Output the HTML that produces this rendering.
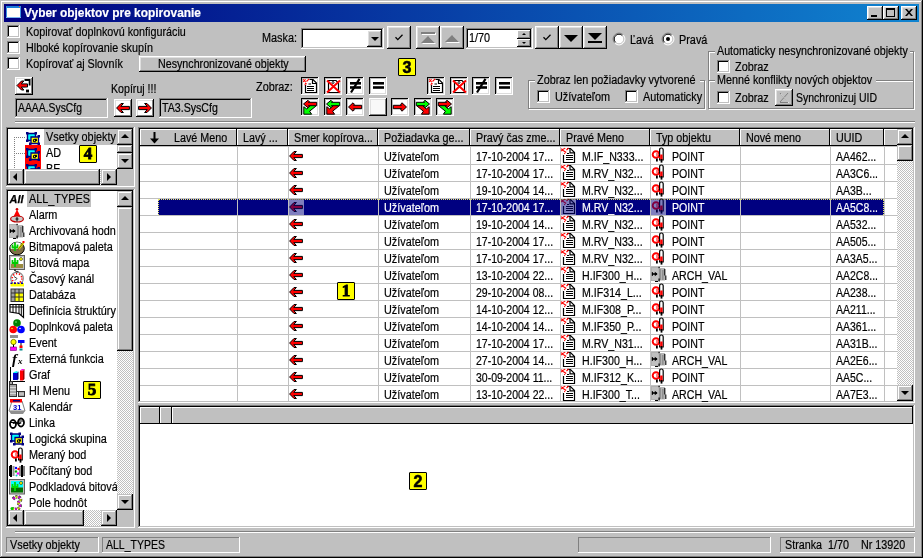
<!DOCTYPE html>
<html><head><meta charset="utf-8"><title>Vyber objektov pre kopirovanie</title>
<style>
html,body{margin:0;padding:0;background:#c0c0c0;}
body{width:923px;height:558px;position:relative;overflow:hidden;font-family:"Liberation Sans",sans-serif;font-size:12.5px;}
div,span,svg{position:absolute;box-sizing:border-box;}
svg{overflow:visible;}
.t{white-space:nowrap;line-height:14px;height:14px;transform-origin:0 50%;font-size:12.5px;-webkit-text-stroke:.2px currentColor;}
.win{left:0;top:0;width:923px;height:558px;background:#c0c0c0;box-shadow:inset -1px -1px 0 #000,inset 1px 1px 0 #c0c0c0,inset -2px -2px 0 #808080,inset 2px 2px 0 #fff;}
.btn{background:#c0c0c0;box-shadow:inset -1px -1px 0 #000,inset 1px 1px 0 #fff,inset -2px -2px 0 #808080,inset 2px 2px 0 #dfdfdf;}
.sb{background:#c0c0c0;box-shadow:inset -1px -1px 0 #000,inset 1px 1px 0 #c0c0c0,inset -2px -2px 0 #808080,inset 2px 2px 0 #fff;}
.btnw{background:#fff;box-shadow:inset -1px -1px 0 #000,inset 1px 1px 0 #fff,inset -2px -2px 0 #808080,inset 2px 2px 0 #dfdfdf;}
.btn1{background:#c0c0c0;box-shadow:inset -1px -1px 0 #000,inset 1px 1px 0 #fff,inset -2px -2px 0 #808080;}
.sunk{box-shadow:inset -1px -1px 0 #fff,inset 1px 1px 0 #808080,inset -2px -2px 0 #c0c0c0,inset 2px 2px 0 #000;}
.sunk1{box-shadow:inset -1px -1px 0 #fff,inset 1px 1px 0 #808080;}
.down{background:#fff;box-shadow:inset -1px -1px 0 #fff,inset 1px 1px 0 #000,inset -2px -2px 0 #dcdcdc,inset 2px 2px 0 #b8b8b8;}
.chk{width:13px;height:13px;background:#fff;box-shadow:inset -1px -1px 0 #fff,inset 1px 1px 0 #808080,inset -2px -2px 0 #c0c0c0,inset 2px 2px 0 #000;}
.hdr{background:#c0c0c0;box-shadow:inset -1px -1px 0 #000,inset 1px 1px 0 #fff;}
.dith{background:repeating-conic-gradient(#fff 0 25%,#c0c0c0 0 50%) 0 0/2px 2px;}
.hl{height:1px;background:#808080;}
.wl{height:1px;background:#fff;}
.bdg{background:#ff0;border:1px solid #000;border-radius:1px;}
.bt{white-space:nowrap;text-align:center;font-weight:bold;font-size:16px;line-height:16px;height:16px;color:#000;-webkit-text-stroke:.5px #000;}
.root{left:0;top:0;width:923px;height:558px;overflow:hidden;will-change:transform;}
</style></head><body>
<div class="root">
<div class="win"></div>

<div class="" style="left:4px;top:4px;width:915px;height:18px;background:linear-gradient(90deg,#000080 0%,#1084d0 100%);"></div>
<svg style="left:6px;top:6px" width="15" height="12" viewBox="0 0 15 12"><rect x="0" y="0" width="15" height="12" fill="#fffff8"/><rect x="0" y="0" width="15" height="2" fill="#1c7fd8"/><rect x="0" y="0" width="1" height="12" fill="#3a8fe0"/><rect x="14" y="0" width="1" height="12" fill="#3a8fe0"/><rect x="0" y="11" width="15" height="1" fill="#7db7ee"/><rect x="13" y="0" width="1" height="1" fill="#e86020"/></svg>
<span class="t" style="left:24px;top:6px;color:#fff;font-weight:bold;transform:scaleX(0.953);">Vyber objektov pre kopirovanie</span>
<div class="btn" style="left:867px;top:6px;width:16px;height:14px;"><div style="left:4px;top:9px;width:6px;height:2px;background:#000"></div></div>
<div class="btn" style="left:883px;top:6px;width:16px;height:14px;"><div style="left:3px;top:2px;width:9px;height:9px;border:1px solid #000;border-top:2px solid #000"></div></div>
<div class="btn" style="left:901px;top:6px;width:16px;height:14px;"><svg style="left:4px;top:3px" width="8" height="7" viewBox="0 0 8 7"><path d="M0 0h2l2 2.3L6 0h2L5 3.5 8 7H6L4 4.7 2 7H0l3-3.5z" fill="#000"/></svg></div>
<div class="chk" style="left:7px;top:25px;width:13px;height:13px;"></div>
<span class="t" style="left:25.5px;top:25px;color:#000;transform:scaleX(0.862);">Kopirovať doplnkovú konfiguráciu</span>
<div class="chk" style="left:7px;top:41px;width:13px;height:13px;"></div>
<span class="t" style="left:25.5px;top:41px;color:#000;transform:scaleX(0.862);">Hlboké kopírovanie skupín</span>
<div class="chk" style="left:7px;top:57px;width:13px;height:13px;"></div>
<span class="t" style="left:25.5px;top:57px;color:#000;transform:scaleX(0.862);">Kopírovať aj Slovník</span>
<div class="btn" style="left:139px;top:56px;width:167px;height:16px;"></div>
<span class="t" style="left:157.5px;top:57px;color:#000;transform:scaleX(0.855);">Nesynchronizované objekty</span>
<div class="btnw" style="left:15px;top:77px;width:18px;height:18px;"><svg style="left:0px;top:0px" width="18" height="18" viewBox="0 0 18 18"><path d="M2 8.5 L6.5 4 H8.9 L6.3 6.9 H12.5 V10.1 H6.3 L8.9 13 H6.5 Z" fill="#f00" stroke="#000" stroke-width="1"/><path d="M9.5 3H14.6V8.6" fill="none" stroke="#000" stroke-width="1.8"/><rect x="10.5" y="10.8" width="3.6" height="1.6" fill="#fff"/><rect x="11" y="12.6" width="3" height="2.8" fill="#000"/></svg></div>
<span class="t" style="left:111px;top:82px;color:#000;transform:scaleX(0.85);">Kopíruj !!!</span>
<div class="sunk" style="left:15px;top:98px;width:93px;height:20px;"></div>
<span class="t" style="left:18px;top:101px;color:#000;transform:scaleX(0.83);">AAAA.SysCfg</span>
<div class="btnw" style="left:114px;top:99px;width:18px;height:18px;"><svg style="left:2px;top:4px" width="14" height="10" viewBox="0 0 14 10"><path d="M0.6 5 L5 0.5 H7.4 L4.8 3.4 H13.4 V6.6 H4.8 L7.4 9.5 H5 Z" fill="#f00" stroke="#000" stroke-width="1"/></svg></div>
<div class="btnw" style="left:136px;top:99px;width:18px;height:18px;"><svg style="left:2px;top:4px" width="14" height="10" viewBox="0 0 14 10"><path d="M13.4 5 L9 0.5 H6.6 L9.2 3.4 H0.6 V6.6 H9.2 L6.6 9.5 H9 Z" fill="#f00" stroke="#000" stroke-width="1"/></svg></div>
<div class="sunk" style="left:159px;top:98px;width:93px;height:20px;"></div>
<span class="t" style="left:162px;top:101px;color:#000;transform:scaleX(0.85);">TA3.SysCfg</span>
<span class="t" style="left:262px;top:31px;color:#000;transform:scaleX(0.868);">Maska:</span>
<div class="sunk" style="left:301px;top:28px;width:83px;height:21px;background:#fff;"></div>
<div class="btn" style="left:367px;top:30px;width:15px;height:17px;"><div style="left:3.5px;top:6.5px;width:0;height:0;border-left:4px solid transparent;border-right:4px solid transparent;border-top:4.5px solid #000"></div></div>
<div class="btn" style="left:387px;top:26px;width:24px;height:23px;"><svg style="left:8px;top:8px" width="8" height="7" viewBox="0 0 8 7"><path d="M0.5 3.2 L2.8 5.6 L7.5 0.8" fill="none" stroke="#000" stroke-width="1.3"/></svg></div>
<div class="btn" style="left:416px;top:26px;width:24px;height:23px;"><div style="left:5px;top:6px;width:14px;height:2px;background:#808080;box-shadow:1px 1px 0 #fff"></div><div style="left:6px;top:11px;width:0;height:0;border-left:7px solid transparent;border-right:7px solid transparent;border-bottom:7px solid #fff"></div><div style="left:5px;top:10px;width:0;height:0;border-left:7px solid transparent;border-right:7px solid transparent;border-bottom:7px solid #808080"></div></div>
<div class="btn" style="left:440px;top:26px;width:24px;height:23px;"><div style="left:6px;top:9.5px;width:0;height:0;border-left:7px solid transparent;border-right:7px solid transparent;border-bottom:7px solid #fff"></div><div style="left:5px;top:8.5px;width:0;height:0;border-left:7px solid transparent;border-right:7px solid transparent;border-bottom:7px solid #808080"></div></div>
<div class="sunk" style="left:466px;top:28px;width:67px;height:21px;background:#fff;"></div>
<span class="t" style="left:469px;top:31px;color:#000;transform:scaleX(0.868);">1/70</span>
<div class="btn1" style="left:517px;top:30px;width:14px;height:9px;"><div style="left:4.5px;top:3px;width:0;height:0;border-left:2.5px solid transparent;border-right:2.5px solid transparent;border-bottom:2.5px solid #000"></div></div>
<div class="btn1" style="left:517px;top:39px;width:14px;height:8px;"><div style="left:4.5px;top:3px;width:0;height:0;border-left:2.5px solid transparent;border-right:2.5px solid transparent;border-top:2.5px solid #000"></div></div>
<div class="btn" style="left:535px;top:26px;width:24px;height:23px;"><svg style="left:8px;top:8px" width="8" height="7" viewBox="0 0 8 7"><path d="M0.5 3.2 L2.8 5.6 L7.5 0.8" fill="none" stroke="#000" stroke-width="1.3"/></svg></div>
<div class="btn" style="left:559px;top:26px;width:24px;height:23px;"><div style="left:5px;top:9px;width:0;height:0;border-left:7px solid transparent;border-right:7px solid transparent;border-top:7px solid #000"></div></div>
<div class="btn" style="left:583px;top:26px;width:24px;height:23px;"><div style="left:5px;top:6.5px;width:0;height:0;border-left:7px solid transparent;border-right:7px solid transparent;border-top:7px solid #000"></div><div style="left:5px;top:15px;width:14px;height:2px;background:#000"></div></div>
<svg style="left:613px;top:33px" width="12" height="12" viewBox="0 0 12 12"><circle cx="6" cy="6" r="5.5" fill="#fff"/><path d="M1.8 10.2 A5.5 5.5 0 0 1 10.2 1.8" fill="none" stroke="#808080" stroke-width="1"/><path d="M10.2 1.8 A5.5 5.5 0 0 1 1.8 10.2" fill="none" stroke="#fff" stroke-width="1"/><path d="M2.6 9.4 A4.5 4.5 0 0 1 9.4 2.6" fill="none" stroke="#000" stroke-width="1"/><path d="M9.4 2.6 A4.5 4.5 0 0 1 2.6 9.4" fill="none" stroke="#c0c0c0" stroke-width="1"/></svg>
<span class="t" style="left:630px;top:33px;color:#000;transform:scaleX(0.868);">Ľavá</span>
<svg style="left:662px;top:33px" width="12" height="12" viewBox="0 0 12 12"><circle cx="6" cy="6" r="5.5" fill="#fff"/><path d="M1.8 10.2 A5.5 5.5 0 0 1 10.2 1.8" fill="none" stroke="#808080" stroke-width="1"/><path d="M10.2 1.8 A5.5 5.5 0 0 1 1.8 10.2" fill="none" stroke="#fff" stroke-width="1"/><path d="M2.6 9.4 A4.5 4.5 0 0 1 9.4 2.6" fill="none" stroke="#000" stroke-width="1"/><path d="M9.4 2.6 A4.5 4.5 0 0 1 2.6 9.4" fill="none" stroke="#c0c0c0" stroke-width="1"/><circle cx="6" cy="6" r="2" fill="#000"/></svg>
<span class="t" style="left:679px;top:33px;color:#000;transform:scaleX(0.868);">Pravá</span>
<div class="bdg" style="left:398px;top:58px;width:18px;height:18px;"></div>
<span class="bt" style="left:398px;top:59.5px;width:18px;font-family:'Liberation Sans',sans-serif;font-size:16px;-webkit-text-stroke:.6px #000">3</span>
<span class="t" style="left:255.5px;top:80px;color:#000;transform:scaleX(0.868);">Zobraz:</span>
<div class="down" style="left:301px;top:77px;width:18px;height:18px;"><svg style="left:0px;top:0px" width="18" height="18" viewBox="0 0 18 18"><path d="M4.5 2.5H12L15.5 6V15.5H4.5Z" fill="#fff" stroke="#000" stroke-width="1.2"/><path d="M11.5 2.5V6.5H15.5" fill="none" stroke="#000" stroke-width="1.2"/><path d="M7.5 7H10M6 9.5H13M6 11.5H13M6 13.5H13" stroke="#000" stroke-width="1.1"/><rect x="2" y="2" width="6.5" height="4" fill="#fff"/><rect x="3" y="5" width="3" height="3" fill="#fff"/><path d="M2.2 2.4l2.4 2.4M4.6 2.4L2.2 4.8M5.5 4.5l2.6-2.6M4 6l1.6 1M3.6 7.6h1" stroke="#f00" stroke-width="1.1"/></svg></div>
<div class="down" style="left:324px;top:77px;width:18px;height:18px;"><svg style="left:0px;top:0px" width="18" height="18" viewBox="0 0 18 18"><path d="M4.5 3.5H12L14.5 6V15.5H4.5Z" fill="#fff" stroke="#000" stroke-width="1.2"/><circle cx="9" cy="5.5" r="1" fill="none" stroke="#000" stroke-width=".9"/><path d="M3 3.5L16 15.5M16 3.5L3 15.5" stroke="#f00" stroke-width="2"/></svg></div>
<div class="down" style="left:346px;top:77px;width:18px;height:18px;"><svg style="left:0px;top:0px" width="18" height="18" viewBox="0 0 18 18"><rect x="4" y="5" width="11" height="2.6" fill="#000"/><rect x="4" y="9.2" width="11" height="2.6" fill="#000"/><path d="M13.5 1.8L5 15.5" stroke="#000" stroke-width="2.2"/></svg></div>
<div class="down" style="left:369px;top:77px;width:18px;height:18px;"><svg style="left:0px;top:0px" width="18" height="18" viewBox="0 0 18 18"><rect x="4" y="5" width="11" height="2.6" fill="#000"/><rect x="4" y="9.2" width="11" height="2.6" fill="#000"/></svg></div>
<div class="down" style="left:427px;top:77px;width:18px;height:18px;"><svg style="left:0px;top:0px" width="18" height="18" viewBox="0 0 18 18"><path d="M4.5 2.5H12L15.5 6V15.5H4.5Z" fill="#fff" stroke="#000" stroke-width="1.2"/><path d="M11.5 2.5V6.5H15.5" fill="none" stroke="#000" stroke-width="1.2"/><path d="M7.5 7H10M6 9.5H13M6 11.5H13M6 13.5H13" stroke="#000" stroke-width="1.1"/><rect x="2" y="2" width="6.5" height="4" fill="#fff"/><rect x="3" y="5" width="3" height="3" fill="#fff"/><path d="M2.2 2.4l2.4 2.4M4.6 2.4L2.2 4.8M5.5 4.5l2.6-2.6M4 6l1.6 1M3.6 7.6h1" stroke="#f00" stroke-width="1.1"/></svg></div>
<div class="down" style="left:450px;top:77px;width:18px;height:18px;"><svg style="left:0px;top:0px" width="18" height="18" viewBox="0 0 18 18"><path d="M4.5 3.5H12L14.5 6V15.5H4.5Z" fill="#fff" stroke="#000" stroke-width="1.2"/><circle cx="9" cy="5.5" r="1" fill="none" stroke="#000" stroke-width=".9"/><path d="M3 3.5L16 15.5M16 3.5L3 15.5" stroke="#f00" stroke-width="2"/></svg></div>
<div class="down" style="left:472px;top:77px;width:18px;height:18px;"><svg style="left:0px;top:0px" width="18" height="18" viewBox="0 0 18 18"><rect x="4" y="5" width="11" height="2.6" fill="#000"/><rect x="4" y="9.2" width="11" height="2.6" fill="#000"/><path d="M13.5 1.8L5 15.5" stroke="#000" stroke-width="2.2"/></svg></div>
<div class="down" style="left:495px;top:77px;width:18px;height:18px;"><svg style="left:0px;top:0px" width="18" height="18" viewBox="0 0 18 18"><rect x="4" y="5" width="11" height="2.6" fill="#000"/><rect x="4" y="9.2" width="11" height="2.6" fill="#000"/></svg></div>
<div class="down" style="left:301px;top:98px;width:18px;height:18px;"><svg style="left:0px;top:0px" width="18" height="18" viewBox="0 0 18 18"><path d="M2.8 16.2 V8.7 L5.8 11 L11 6 L14.8 8.2 L8.6 13.2 L10.6 16.2 Z" fill="#0f0" stroke="#000" stroke-width="1"/><path d="M2.5 6.0 L7 2.3 L8.4 3.7 L7.4 4.3 H15.7 V7.7 H7.4 L8.4 8.3 L7 9.7 Z" fill="#f00" stroke="#000" stroke-width="1"/></svg></div>
<div class="down" style="left:324px;top:98px;width:18px;height:18px;"><svg style="left:0px;top:0px" width="18" height="18" viewBox="0 0 18 18"><path d="M2.8 16.2 V8.7 L5.8 11 L11 6 L14.8 8.2 L8.6 13.2 L10.6 16.2 Z" fill="#f00" stroke="#000" stroke-width="1"/><path d="M2.5 6.0 L7 2.3 L8.4 3.7 L7.4 4.3 H15.7 V7.7 H7.4 L8.4 8.3 L7 9.7 Z" fill="#0f0" stroke="#000" stroke-width="1"/></svg></div>
<div class="down" style="left:346px;top:98px;width:18px;height:18px;"><svg style="left:0px;top:0px" width="18" height="18" viewBox="0 0 18 18"><path d="M2.5 9.0 L7 4.8 L8.4 6.2 L7.4 7.3 H15.7 V10.7 H7.4 L8.4 11.8 L7 13.2 Z" fill="#f00" stroke="#000" stroke-width="1"/></svg></div>
<div class="btn" style="left:369px;top:98px;width:18px;height:18px;background:#f8f8f8;"></div>
<div class="down" style="left:391px;top:98px;width:18px;height:18px;"><svg style="left:0px;top:0px" width="18" height="18" viewBox="0 0 18 18"><path d="M15.5 9.0 L11 4.8 L9.6 6.2 L10.6 7.3 H2.3 V10.7 H10.6 L9.6 11.8 L11 13.2 Z" fill="#f00" stroke="#000" stroke-width="1"/></svg></div>
<div class="down" style="left:414px;top:98px;width:18px;height:18px;"><svg style="left:0px;top:0px" width="18" height="18" viewBox="0 0 18 18"><path d="M15.2 16.2 V8.7 L12.2 11 L7 6 L3.2 8.2 L9.4 13.2 L7.4 16.2 Z" fill="#f00" stroke="#000" stroke-width="1"/><path d="M15.5 6.0 L11 2.3 L9.6 3.7 L10.6 4.3 H2.3 V7.7 H10.6 L9.6 8.3 L11 9.7 Z" fill="#0f0" stroke="#000" stroke-width="1"/></svg></div>
<div class="down" style="left:436px;top:98px;width:18px;height:18px;"><svg style="left:0px;top:0px" width="18" height="18" viewBox="0 0 18 18"><path d="M15.2 16.2 V8.7 L12.2 11 L7 6 L3.2 8.2 L9.4 13.2 L7.4 16.2 Z" fill="#0f0" stroke="#000" stroke-width="1"/><path d="M15.5 6.0 L11 2.3 L9.6 3.7 L10.6 4.3 H2.3 V7.7 H10.6 L9.6 8.3 L11 9.7 Z" fill="#f00" stroke="#000" stroke-width="1"/></svg></div>
<div class="" style="left:528px;top:80px;width:177px;height:29px;border:1px solid #808080;box-shadow:1px 1px 0 #fff,inset 1px 1px 0 #fff;"></div>
<div class="" style="left:534.5px;top:74px;width:165px;height:13px;background:#c0c0c0;"></div>
<span class="t" style="left:536.5px;top:73px;color:#000;transform:scaleX(0.868);">Zobraz len požiadavky vytvorené</span>
<div class="chk" style="left:537px;top:90px;width:13px;height:13px;"></div>
<span class="t" style="left:555px;top:90px;color:#000;transform:scaleX(0.868);">Užívateľom</span>
<div class="chk" style="left:625px;top:90px;width:13px;height:13px;"></div>
<span class="t" style="left:642.5px;top:90px;color:#000;transform:scaleX(0.868);">Automaticky</span>
<div class="" style="left:708px;top:51px;width:206px;height:58px;border:1px solid #808080;box-shadow:1px 1px 0 #fff,inset 1px 1px 0 #fff;"></div>
<div class="" style="left:715px;top:45px;width:195px;height:13px;background:#c0c0c0;"></div>
<span class="t" style="left:717px;top:44px;color:#000;transform:scaleX(0.858);">Automaticky nesynchronizované objekty</span>
<div class="chk" style="left:717px;top:60px;width:13px;height:13px;"></div>
<span class="t" style="left:735px;top:60px;color:#000;transform:scaleX(0.868);">Zobraz</span>
<div class="hl" style="left:709px;top:80px;width:204px;height:1px;"></div>
<div class="wl" style="left:709px;top:81px;width:204px;height:1px;"></div>
<div class="" style="left:715px;top:74px;width:161px;height:13px;background:#c0c0c0;"></div>
<span class="t" style="left:717px;top:73px;color:#000;transform:scaleX(0.862);">Menné konflikty nových objektov</span>
<div class="chk" style="left:717px;top:91px;width:13px;height:13px;"></div>
<span class="t" style="left:735px;top:91px;color:#000;transform:scaleX(0.868);">Zobraz</span>
<div class="btn" style="left:775px;top:89px;width:18px;height:17px;"><svg style="left:4px;top:3px" width="10" height="11" viewBox="0 0 10 11"><path d="M1 1L9 10M9 1L1 10" stroke="#808080" stroke-width="1"/><path d="M2 2L10 11" stroke="#fff" stroke-width=".6"/><path d="M1 10.5H9" stroke="#808080" stroke-width="1"/></svg></div>
<span class="t" style="left:796px;top:91px;color:#000;transform:scaleX(0.84);">Synchronizuj UID</span>
<div class="hl" style="left:15px;top:121px;width:900px;height:1px;"></div>
<div class="wl" style="left:15px;top:122px;width:900px;height:1px;"></div>
<div class="hl" style="left:15px;top:531px;width:900px;height:1px;"></div>
<div class="wl" style="left:15px;top:532px;width:900px;height:1px;"></div>
<div class="sunk" style="left:6px;top:127px;width:129px;height:60px;background:#fff;"></div>
<div style="left:14px;top:137px;width:1px;height:32px;background:repeating-linear-gradient(180deg,#808080 0 1px,#fff 1px 2px)"></div>
<div style="left:14px;top:137px;width:12px;height:1px;background:repeating-linear-gradient(90deg,#808080 0 1px,#fff 1px 2px)"></div>
<div style="left:14px;top:153px;width:12px;height:1px;background:repeating-linear-gradient(90deg,#808080 0 1px,#fff 1px 2px)"></div>
<div class="" style="left:44px;top:129px;width:73px;height:16px;background:#c0c0c0;"></div>
<svg style="left:26px;top:132px" width="14" height="13" viewBox="0 0 14 13"><path d="M1.5 1.5H9.5V8.5H1.5Z" fill="#0ff" stroke="#000080" stroke-width="1.4"/><g fill="#000080"><rect x="0" y="0" width="2.5" height="2.5"/><rect x="8.5" y="0" width="2.5" height="2.5"/><rect x="0" y="7.5" width="2.5" height="2.5"/><rect x="11.5" y="3" width="2.5" height="2.5"/><rect x="3" y="10.5" width="2.5" height="2.5"/><rect x="11.5" y="10.5" width="2.5" height="2.5"/></g><path d="M5 5H12.5V11.5H5Z" fill="#ff0" stroke="#000080" stroke-width="1.3"/><path d="M10.8 7.2H8.6Q7.4 7.2 7.4 8.4Q7.4 9.7 8.7 9.7H10M9 8.4h2" fill="none" stroke="#000" stroke-width="1.1"/></svg>
<span class="t" style="left:46px;top:130px;color:#000;transform:scaleX(0.868);">Vsetky objekty</span>
<div class="" style="left:25px;top:145px;width:16px;height:16px;background:#f00;"></div>
<svg style="left:26px;top:148px" width="14" height="13" viewBox="0 0 14 13"><path d="M1.5 1.5H9.5V8.5H1.5Z" fill="#0ff" stroke="#000080" stroke-width="1.4"/><g fill="#000080"><rect x="0" y="0" width="2.5" height="2.5"/><rect x="8.5" y="0" width="2.5" height="2.5"/><rect x="0" y="7.5" width="2.5" height="2.5"/><rect x="11.5" y="3" width="2.5" height="2.5"/><rect x="3" y="10.5" width="2.5" height="2.5"/><rect x="11.5" y="10.5" width="2.5" height="2.5"/></g><path d="M5 5H12.5V11.5H5Z" fill="#ff0" stroke="#000080" stroke-width="1.3"/><path d="M10.8 7.2H8.6Q7.4 7.2 7.4 8.4Q7.4 9.7 8.7 9.7H10M9 8.4h2" fill="none" stroke="#000" stroke-width="1.1"/></svg>
<span class="t" style="left:46px;top:146px;color:#000;transform:scaleX(0.868);">AD</span>
<div class="" style="left:25px;top:161px;width:16px;height:8px;background:#f00;overflow:hidden;"><svg style="left:1px;top:3px" width="14" height="13" viewBox="0 0 14 13"><path d="M1.5 1.5H9.5V8.5H1.5Z" fill="#0ff" stroke="#000080" stroke-width="1.4"/><g fill="#000080"><rect x="0" y="0" width="2.5" height="2.5"/><rect x="8.5" y="0" width="2.5" height="2.5"/><rect x="0" y="7.5" width="2.5" height="2.5"/><rect x="11.5" y="3" width="2.5" height="2.5"/><rect x="3" y="10.5" width="2.5" height="2.5"/><rect x="11.5" y="10.5" width="2.5" height="2.5"/></g><path d="M5 5H12.5V11.5H5Z" fill="#ff0" stroke="#000080" stroke-width="1.3"/><path d="M10.8 7.2H8.6Q7.4 7.2 7.4 8.4Q7.4 9.7 8.7 9.7H10M9 8.4h2" fill="none" stroke="#000" stroke-width="1.1"/></svg></div>
<div style="left:44px;top:161px;width:40px;height:8px;overflow:hidden"><span class="t" style="left:2px;top:1px;transform:scaleX(0.868)">BE</span></div>
<div class="bdg" style="left:79px;top:145px;width:18px;height:18px;"></div>
<span class="bt" style="left:79px;top:146px;width:18px;font-family:'Liberation Serif',serif;font-size:17px;-webkit-text-stroke:.8px #000">4</span>
<div class="sb" style="left:117px;top:129px;width:16px;height:16px;"><div style="left:4px;top:5px;width:0;height:0;border-left:4px solid transparent;border-right:4px solid transparent;border-bottom:4.5px solid #000"></div></div>
<div class="sb" style="left:117px;top:145px;width:16px;height:8px;"></div>
<div class="sb" style="left:117px;top:153px;width:16px;height:16px;"><div style="left:4px;top:6px;width:0;height:0;border-left:4px solid transparent;border-right:4px solid transparent;border-top:4.5px solid #000"></div></div>
<div class="dith" style="left:8px;top:169px;width:109px;height:16px;"></div>
<div class="sb" style="left:8px;top:169px;width:16px;height:16px;"><div style="left:5px;top:4px;width:0;height:0;border-top:4px solid transparent;border-bottom:4px solid transparent;border-right:4.5px solid #000"></div></div>
<div class="sb" style="left:24px;top:169px;width:76px;height:16px;"></div>
<div class="sb" style="left:101px;top:169px;width:16px;height:16px;"><div style="left:6px;top:4px;width:0;height:0;border-top:4px solid transparent;border-bottom:4px solid transparent;border-left:4.5px solid #000"></div></div>
<div class="" style="left:117px;top:169px;width:16px;height:16px;background:#c0c0c0;"></div>
<div class="sunk" style="left:6px;top:189px;width:129px;height:339px;background:#fff;"></div>
<div style="left:8px;top:191px;width:109px;height:319px;overflow:hidden">
<div class="" style="left:19px;top:0px;width:64px;height:16px;background:#c0c0c0;"></div>
<svg style="left:1px;top:0px" width="16" height="16" viewBox="0 0 16 16"><text x="0.5" y="12" font-family="Liberation Sans" font-weight="bold" font-style="italic" font-size="11" textLength="14" lengthAdjust="spacingAndGlyphs" fill="#000" stroke="#000" stroke-width=".25">All</text></svg>
<span class="t" style="left:21px;top:1px;transform:scaleX(0.868)">ALL_TYPES</span>
<svg style="left:1px;top:16px" width="16" height="16" viewBox="0 0 16 16"><path d="M8 2.5L4 10.5H12Z" fill="#f00"/><circle cx="8" cy="2.2" r="1.3" fill="#d00000"/><ellipse cx="8" cy="12" rx="6.4" ry="3" fill="#c8c8c8" stroke="#c00000" stroke-width="1.2"/><path d="M8 10V14.5M6.5 12H9.5" stroke="#000" stroke-width="1"/></svg>
<span class="t" style="left:21px;top:17px;transform:scaleX(0.868)">Alarm</span>
<svg style="left:1px;top:32px" width="16" height="16" viewBox="0 0 16 16"><rect x="0.5" y="1.5" width="7.5" height="13" fill="#c0c0c0" stroke="#b0b0b0" stroke-width="1"/><rect x="8" y="2" width="6" height="12.5" fill="#b4b4b4"/><rect x="8.3" y="3" width="1.4" height="11" fill="#808080"/><rect x="11" y="4" width="1.6" height="10" fill="#909090"/><path d="M13.8 3V9.5M14.8 9.5V14" stroke="#000" stroke-width="1.1"/><rect x="7.5" y="0.8" width="1.2" height="1.4" fill="#000"/><rect x="7.5" y="12.5" width="1.2" height="3" fill="#000"/><path d="M4 15.5H7" stroke="#000" stroke-width="1"/><path d="M1 8H6" stroke="#000" stroke-width="1.6"/><path d="M3.8 5.8L6.6 8L3.8 10.2Z" fill="#000"/><rect x="0.8" y="6.2" width="1.2" height="3.6" fill="#000"/></svg>
<span class="t" style="left:21px;top:33px;transform:scaleX(0.868)">Archivovaná hodn</span>
<svg style="left:1px;top:48px" width="16" height="16" viewBox="0 0 16 16"><ellipse cx="8" cy="9.5" rx="7.3" ry="6.3" fill="#807048" stroke="#000" stroke-width="1"/><path d="M1.5 8A6.5 5.5 0 0 1 12 4.5L9 10H2Z" fill="#fff"/><path d="M6 3.5V12M3.5 5.5V8.5H8.5V5.5" fill="none" stroke="#0c0" stroke-width="1.8"/><path d="M9.5 10L14.5 4" stroke="#e8e000" stroke-width="2"/><path d="M9 10.5L14 4.5" stroke="#000" stroke-width=".5"/><rect x="13.5" y="2" width="2" height="2" fill="#f00"/></svg>
<span class="t" style="left:21px;top:49px;transform:scaleX(0.868)">Bitmapová paleta</span>
<svg style="left:1px;top:64px" width="16" height="16" viewBox="0 0 16 16"><rect x="0.5" y="0.5" width="15" height="14" fill="#c0c0c0" stroke="#606060"/><rect x="2" y="2" width="12" height="7" fill="#fff"/><rect x="2" y="9" width="12" height="4" fill="#9a8a40"/><path d="M6 3V12M3.5 5V8H8.5V5" fill="none" stroke="#0c0" stroke-width="1.8"/><circle cx="12" cy="4" r="1.5" fill="#ff0" stroke="#000" stroke-width=".5"/><path d="M6 14.5V16" stroke="#000" stroke-width="1.5"/></svg>
<span class="t" style="left:21px;top:65px;transform:scaleX(0.868)">Bitová mapa</span>
<svg style="left:1px;top:80px" width="16" height="16" viewBox="0 0 16 16"><circle cx="8" cy="7.5" r="6.3" fill="#fff" stroke="#909090" stroke-width="1.3"/><circle cx="8" cy="7.5" r="4.8" fill="none" stroke="#f00" stroke-width="1.6" stroke-dasharray="1.2 1.8"/><path d="M8 7.5L5 5.5M8 7.5L6 9.5" stroke="#404040" stroke-width="1"/><rect x="1.5" y="12" width="13.5" height="3.5" fill="#ff0"/><path d="M1.5 12.3h13.5" stroke="#00a" stroke-width="1.4" stroke-dasharray="2 1.5"/><path d="M6.5 0.6h3" stroke="#404040" stroke-width="1.4"/></svg>
<span class="t" style="left:21px;top:81px;transform:scaleX(0.868)">Časový kanál</span>
<svg style="left:1px;top:96px" width="16" height="16" viewBox="0 0 16 16"><rect x="1.5" y="1.5" width="13.5" height="13.5" fill="#303030"/><g fill="#a0a0a0"><rect x="2.5" y="2.5" width="3" height="3"/><rect x="6.5" y="2.5" width="3" height="3"/><rect x="10.5" y="2.5" width="3.5" height="3"/><rect x="2.5" y="6.5" width="3" height="3"/><rect x="2.5" y="10.5" width="3" height="3.5"/></g><g fill="#ff0"><rect x="6.5" y="6.5" width="3" height="3"/><rect x="10.5" y="6.5" width="3.5" height="3"/><rect x="6.5" y="10.5" width="3" height="3.5"/><rect x="10.5" y="10.5" width="3.5" height="3.5"/></g></svg>
<span class="t" style="left:21px;top:97px;transform:scaleX(0.868)">Databáza</span>
<svg style="left:1px;top:112px" width="16" height="16" viewBox="0 0 16 16"><path d="M1 1.5H14.5V14.5L10 10.5L1 9Z" fill="#fff" stroke="#000" stroke-width="1.2"/><path d="M4 1.5V9.5M7 1.5V10M10 1.5V10.5M12.3 1.5V12.5M1 4H14.5" stroke="#000" stroke-width="1"/></svg>
<span class="t" style="left:21px;top:113px;transform:scaleX(0.868)">Definícia štruktúry</span>
<svg style="left:1px;top:128px" width="16" height="16" viewBox="0 0 16 16"><circle cx="8" cy="4" r="3.8" fill="#008000"/><circle cx="4.2" cy="10.5" r="3.8" fill="#f00"/><circle cx="12" cy="10.5" r="3.8" fill="#00f"/><circle cx="7" cy="3" r=".8" fill="#8f8"/><circle cx="3" cy="9.5" r=".8" fill="#ff0"/><circle cx="11" cy="9.5" r=".8" fill="#fff"/></svg>
<span class="t" style="left:21px;top:129px;transform:scaleX(0.868)">Doplnková paleta</span>
<svg style="left:1px;top:144px" width="16" height="16" viewBox="0 0 16 16"><rect x="1" y="0" width="8" height="3" fill="#909090"/><circle cx="4.5" cy="7" r="2.6" fill="#ff0" stroke="#808000"/><rect x="9" y="5" width="6.5" height="3" fill="#00f"/><rect x="1.5" y="12" width="6" height="3.5" fill="#f0f" stroke="#800080" stroke-width=".6"/><path d="M4.5 9.5V12M12 8V11" stroke="#000"/><rect x="10.5" y="10.5" width="3" height="2.5" fill="#f00"/><rect x="10.5" y="13.5" width="3" height="2" fill="#088"/></svg>
<span class="t" style="left:21px;top:145px;transform:scaleX(0.868)">Event</span>
<svg style="left:1px;top:160px" width="16" height="16" viewBox="0 0 16 16"><text x="3" y="12.5" font-family="Liberation Serif" font-style="italic" font-weight="bold" font-size="15" fill="#000">f</text><text x="9" y="13" font-family="Liberation Serif" font-style="italic" font-weight="bold" font-size="9" fill="#000">x</text></svg>
<span class="t" style="left:21px;top:161px;transform:scaleX(0.868)">Externá funkcia</span>
<svg style="left:1px;top:176px" width="16" height="16" viewBox="0 0 16 16"><path d="M1.5 0V14.5H16" fill="none" stroke="#000" stroke-width="1"/><path d="M4 6L8 4.5V13H4Z" fill="#00c"/><path d="M4 6L6 4.5L9.5 4.5L8 6Z" fill="#0ff"/><path d="M8 6L9.5 4.5V12L8 13.5Z" fill="#000080"/><path d="M11 3.5L13 2H15.5L14 3.5Z" fill="#f0f"/><path d="M11 3.5H14V13.5H11Z" fill="#f00"/><path d="M14 3.5L15.5 2V12L14 13.5Z" fill="#a00000"/></svg>
<span class="t" style="left:21px;top:177px;transform:scaleX(0.868)">Graf</span>
<svg style="left:1px;top:192px" width="16" height="16" viewBox="0 0 16 16"><g fill="#a8a8a8" stroke="#303030" stroke-width="1"><rect x="0.5" y="-1.5" width="3" height="3"/><rect x="0.5" y="1.5" width="7" height="12"/><rect x="9.5" y="8.5" width="6" height="5"/></g><path d="M7.5 8.5H10" stroke="#303030"/><path d="M1 4.5h6M1 7.5h6M1 10.5h6M10 11h5" stroke="#d8d8d8" stroke-width="1"/></svg>
<span class="t" style="left:21px;top:193px;transform:scaleX(0.868)">HI Menu</span>
<svg style="left:1px;top:208px" width="16" height="16" viewBox="0 0 16 16"><path d="M3 2H13L16 12H0Z" fill="#fff" stroke="#808080" stroke-width="1"/><path d="M0 12H16L14 15H2Z" fill="#909090"/><rect x="1" y="0" width="12" height="3.5" fill="#f00"/><rect x="4" y="1" width="7" height="1.5" fill="#000080"/><text x="4" y="11" font-family="Liberation Sans" font-weight="bold" font-size="7.5" fill="#00c">31</text></svg>
<span class="t" style="left:21px;top:209px;transform:scaleX(0.868)">Kalendár</span>
<svg style="left:1px;top:224px" width="16" height="16" viewBox="0 0 16 16"><g fill="none" stroke="#000" stroke-width="1.8"><ellipse cx="4" cy="9" rx="3" ry="4"/><ellipse cx="12" cy="7.5" rx="3" ry="4"/><path d="M4 8.5C6 6 10 10 12 7.5"/></g><path d="M2 7.5h4M10 6h4" stroke="#000" stroke-width="1.2"/></svg>
<span class="t" style="left:21px;top:225px;transform:scaleX(0.868)">Linka</span>
<svg style="left:1px;top:240px" width="16" height="16" viewBox="0 0 16 16"><g transform="translate(1,1.5)"><path d="M1.5 1.5H9.5V8.5H1.5Z" fill="#0ff" stroke="#000080" stroke-width="1.4"/><g fill="#000080"><rect x="0" y="0" width="2.5" height="2.5"/><rect x="8.5" y="0" width="2.5" height="2.5"/><rect x="0" y="7.5" width="2.5" height="2.5"/><rect x="11.5" y="3" width="2.5" height="2.5"/><rect x="3" y="10.5" width="2.5" height="2.5"/><rect x="11.5" y="10.5" width="2.5" height="2.5"/></g><path d="M5 5H12.5V11.5H5Z" fill="#ff0" stroke="#000080" stroke-width="1.3"/><path d="M10.8 7.2H8.6Q7.4 7.2 7.4 8.4Q7.4 9.7 8.7 9.7H10M9 8.4h2" fill="none" stroke="#000" stroke-width="1.1"/></g></svg>
<span class="t" style="left:21px;top:241px;transform:scaleX(0.868)">Logická skupina</span>
<svg style="left:1px;top:256px" width="16" height="16" viewBox="0 0 16 16"><g transform="translate(1,0)"><circle cx="5" cy="7.5" r="3.3" fill="#fff" stroke="#f00" stroke-width="1.9"/><path d="M6 6V9" stroke="#f00" stroke-width="1"/><path d="M8.6 3Q8.6 1 10.4 1Q12.2 1 12.2 3V13H8.6Z" fill="#fff" stroke="#000" stroke-width="1.2"/><path d="M9.2 7.5H11.6V13H9.2Z" fill="#f00"/><path d="M7.5 10.5L9.2 9V12Z" fill="#f00"/><rect x="5" y="11.5" width="1.8" height="3" fill="#000"/><rect x="9.6" y="12" width="1.8" height="3.6" fill="#000"/></g></svg>
<span class="t" style="left:21px;top:257px;transform:scaleX(0.868)">Meraný bod</span>
<svg style="left:1px;top:272px" width="16" height="16" viewBox="0 0 16 16"><path d="M2 2V14M13 2V14" stroke="#000" stroke-width="2"/><path d="M4.5 3V13M11 3V13" stroke="#909090" stroke-width="2"/><path d="M0.5 3V13M15 3V13" stroke="#000" stroke-width="1"/><circle cx="7" cy="5" r="1.2" fill="#00f"/><circle cx="9.5" cy="6" r="1.2" fill="#f00"/><circle cx="7" cy="8.5" r="1.2" fill="#0a0"/><circle cx="9" cy="10.5" r="1.2" fill="#f0f"/><circle cx="7.5" cy="12.5" r="1" fill="#0cc"/></svg>
<span class="t" style="left:21px;top:273px;transform:scaleX(0.868)">Počítaný bod</span>
<svg style="left:1px;top:288px" width="16" height="16" viewBox="0 0 16 16"><rect x="0.5" y="0.5" width="15" height="14.5" fill="#c0c0c0" stroke="#606060"/><rect x="2" y="2" width="12" height="6.5" fill="#0ff"/><rect x="2" y="8.5" width="12" height="5" fill="#007000"/><path d="M6 3V12M3.5 5V8H8.5V5" fill="none" stroke="#0d0" stroke-width="1.8"/><circle cx="12" cy="4" r="1.5" fill="#ff0" stroke="#000" stroke-width=".5"/></svg>
<span class="t" style="left:21px;top:289px;transform:scaleX(0.868)">Podkladová bitová</span>
<svg style="left:1px;top:304px" width="16" height="16" viewBox="0 0 16 16"><path d="M4 4Q8 0 11 3Q13 6 8 8Q12 9 11 12Q8 16 2 13" fill="none" stroke="#404040" stroke-width="3.4" stroke-dasharray="2 1"/><path d="M4 4Q8 0 11 3Q13 6 8 8Q12 9 11 12Q8 16 2 13" fill="none" stroke="#c0c" stroke-width="2" stroke-dasharray="2 4"/><path d="M4 4Q8 0 11 3Q13 6 8 8Q12 9 11 12Q8 16 2 13" fill="none" stroke="#cc0" stroke-width="2" stroke-dasharray="2 4" stroke-dashoffset="3"/><circle cx="3" cy="13.5" r="1.5" fill="#0c0"/></svg>
<span class="t" style="left:21px;top:305px;transform:scaleX(0.868)">Pole hodnôt</span>
</div>
<div class="bdg" style="left:83px;top:381px;width:18px;height:18px;"></div>
<span class="bt" style="left:83px;top:382px;width:18px;font-family:'Liberation Serif',serif;font-size:17px;-webkit-text-stroke:.8px #000">5</span>
<div class="dith" style="left:117px;top:191px;width:16px;height:319px;"></div>
<div class="sb" style="left:117px;top:191px;width:16px;height:16px;"><div style="left:4px;top:5px;width:0;height:0;border-left:4px solid transparent;border-right:4px solid transparent;border-bottom:4.5px solid #000"></div></div>
<div class="sb" style="left:117px;top:207px;width:16px;height:144px;"></div>
<div class="sb" style="left:117px;top:494px;width:16px;height:16px;"><div style="left:4px;top:6px;width:0;height:0;border-left:4px solid transparent;border-right:4px solid transparent;border-top:4.5px solid #000"></div></div>
<div class="dith" style="left:8px;top:510px;width:109px;height:16px;"></div>
<div class="sb" style="left:8px;top:510px;width:16px;height:16px;"><div style="left:5px;top:4px;width:0;height:0;border-top:4px solid transparent;border-bottom:4px solid transparent;border-right:4.5px solid #000"></div></div>
<div class="sb" style="left:24px;top:510px;width:60px;height:16px;"></div>
<div class="sb" style="left:101px;top:510px;width:16px;height:16px;"><div style="left:6px;top:4px;width:0;height:0;border-top:4px solid transparent;border-bottom:4px solid transparent;border-left:4.5px solid #000"></div></div>
<div class="" style="left:117px;top:510px;width:16px;height:16px;background:#c0c0c0;"></div>
<div class="sunk" style="left:138px;top:127px;width:777px;height:276px;background:#fff;"></div>
<div class="hdr" style="left:140px;top:129px;width:97px;height:17px;"></div>
<span class="t" style="left:174px;top:131px;color:#000;transform:scaleX(0.86);">Lavé Meno</span>
<div class="hdr" style="left:237px;top:129px;width:51px;height:17px;"></div>
<span class="t" style="left:242.5px;top:131px;color:#000;transform:scaleX(0.86);">Lavý ...</span>
<div class="hdr" style="left:288px;top:129px;width:90px;height:17px;"></div>
<span class="t" style="left:293.5px;top:131px;color:#000;transform:scaleX(0.86);">Smer kopírova...</span>
<div class="hdr" style="left:378px;top:129px;width:92px;height:17px;"></div>
<span class="t" style="left:383.5px;top:131px;color:#000;transform:scaleX(0.86);">Požiadavka ge...</span>
<div class="hdr" style="left:470px;top:129px;width:90px;height:17px;"></div>
<span class="t" style="left:475.5px;top:131px;color:#000;transform:scaleX(0.86);">Pravý čas zme...</span>
<div class="hdr" style="left:560px;top:129px;width:90px;height:17px;"></div>
<span class="t" style="left:565.5px;top:131px;color:#000;transform:scaleX(0.86);">Pravé Meno</span>
<div class="hdr" style="left:650px;top:129px;width:90px;height:17px;"></div>
<span class="t" style="left:655.5px;top:131px;color:#000;transform:scaleX(0.86);">Typ objektu</span>
<div class="hdr" style="left:740px;top:129px;width:90px;height:17px;"></div>
<span class="t" style="left:745.5px;top:131px;color:#000;transform:scaleX(0.86);">Nové meno</span>
<div class="hdr" style="left:830px;top:129px;width:54px;height:17px;"></div>
<span class="t" style="left:835.5px;top:131px;color:#000;transform:scaleX(0.86);">UUID</span>
<div class="hdr" style="left:884px;top:129px;width:15px;height:17px;"></div>
<svg style="left:149px;top:132px" width="11" height="12" viewBox="0 0 11 12"><path d="M5.5 0V8" stroke="#000" stroke-width="2"/><path d="M1 6.5H10L5.5 11.5Z" fill="#000"/></svg>
<div class="" style="left:140px;top:146px;width:757px;height:1px;background:#c0c0c0;"></div>
<div class="" style="left:140px;top:164px;width:757px;height:1px;background:#c0c0c0;"></div>
<div class="" style="left:140px;top:181px;width:757px;height:1px;background:#c0c0c0;"></div>
<div class="" style="left:140px;top:198px;width:757px;height:1px;background:#c0c0c0;"></div>
<div class="" style="left:140px;top:215px;width:757px;height:1px;background:#c0c0c0;"></div>
<div class="" style="left:140px;top:232px;width:757px;height:1px;background:#c0c0c0;"></div>
<div class="" style="left:140px;top:249px;width:757px;height:1px;background:#c0c0c0;"></div>
<div class="" style="left:140px;top:266px;width:757px;height:1px;background:#c0c0c0;"></div>
<div class="" style="left:140px;top:283px;width:757px;height:1px;background:#c0c0c0;"></div>
<div class="" style="left:140px;top:300px;width:757px;height:1px;background:#c0c0c0;"></div>
<div class="" style="left:140px;top:317px;width:757px;height:1px;background:#c0c0c0;"></div>
<div class="" style="left:140px;top:334px;width:757px;height:1px;background:#c0c0c0;"></div>
<div class="" style="left:140px;top:351px;width:757px;height:1px;background:#c0c0c0;"></div>
<div class="" style="left:140px;top:368px;width:757px;height:1px;background:#c0c0c0;"></div>
<div class="" style="left:140px;top:385px;width:757px;height:1px;background:#c0c0c0;"></div>
<div class="" style="left:237px;top:146px;width:1px;height:255px;background:#c0c0c0;"></div>
<div class="" style="left:288px;top:146px;width:1px;height:255px;background:#c0c0c0;"></div>
<div class="" style="left:378px;top:146px;width:1px;height:255px;background:#c0c0c0;"></div>
<div class="" style="left:470px;top:146px;width:1px;height:255px;background:#c0c0c0;"></div>
<div class="" style="left:560px;top:146px;width:1px;height:255px;background:#c0c0c0;"></div>
<div class="" style="left:650px;top:146px;width:1px;height:255px;background:#c0c0c0;"></div>
<div class="" style="left:740px;top:146px;width:1px;height:255px;background:#c0c0c0;"></div>
<div class="" style="left:830px;top:146px;width:1px;height:255px;background:#c0c0c0;"></div>
<div class="" style="left:884px;top:146px;width:1px;height:255px;background:#c0c0c0;"></div>
<svg style="left:289px;top:151px" width="14" height="10" viewBox="0 0 14 10"><path d="M0.6 5 L5 0.5 H7.4 L4.8 3.4 H13.4 V6.6 H4.8 L7.4 9.5 H5 Z" fill="#f00" stroke="#000" stroke-width="1"/></svg>
<span class="t" style="left:384px;top:150px;color:#000;transform:scaleX(0.868);">Užívateľom</span>
<span class="t" style="left:475.5px;top:150px;color:#000;transform:scaleX(0.84);">17-10-2004 17...</span>
<svg style="left:561px;top:147px" width="16" height="16" viewBox="0 0 16 16"><path d="M2.5 1.5H9.5L13.5 5.5V15.5H2.5Z" fill="#fff" stroke="#000" stroke-width="1.2"/><path d="M9 1.5V5.8H13.5" fill="none" stroke="#000" stroke-width="1.2"/><path d="M6 6.5H8M4.5 8.5H11.5M4.5 10.5H11.5M4.5 12.5H11.5" stroke="#000" stroke-width="1" shape-rendering="crispEdges"/><rect x="0" y="0.5" width="6" height="4" fill="#fff"/><rect x="1.5" y="4" width="2.6" height="4" fill="#fff"/><path d="M0.2 1.6l2.6 2.6M2.8 1.6L0.2 4.2M3 4l2.2 1.6M3.2 1.2l1 .6M5.5 3.2l2-2.2M3.2 6.2l.9.6" stroke="#f00" stroke-width="1.2"/></svg>
<span class="t" style="left:582px;top:150px;color:#000;transform:scaleX(0.85);">M.IF_N333...</span>
<svg style="left:651px;top:147px" width="16" height="16" viewBox="0 0 16 16"><circle cx="5" cy="7.5" r="3.3" fill="#fff" stroke="#f00" stroke-width="1.9"/><path d="M6 6V9" stroke="#f00" stroke-width="1"/><path d="M8.6 3Q8.6 1 10.4 1Q12.2 1 12.2 3V13H8.6Z" fill="#fff" stroke="#000" stroke-width="1.2"/><path d="M9.2 7.5H11.6V13H9.2Z" fill="#f00"/><path d="M7.5 10.5L9.2 9V12Z" fill="#f00"/><rect x="5" y="11.5" width="1.8" height="3" fill="#000"/><rect x="9.6" y="12" width="1.8" height="3.6" fill="#000"/></svg>
<span class="t" style="left:672px;top:150px;color:#000;transform:scaleX(0.85);">POINT</span>
<span class="t" style="left:836px;top:150px;color:#000;transform:scaleX(0.84);">AA462...</span>
<svg style="left:289px;top:168px" width="14" height="10" viewBox="0 0 14 10"><path d="M0.6 5 L5 0.5 H7.4 L4.8 3.4 H13.4 V6.6 H4.8 L7.4 9.5 H5 Z" fill="#f00" stroke="#000" stroke-width="1"/></svg>
<span class="t" style="left:384px;top:167px;color:#000;transform:scaleX(0.868);">Užívateľom</span>
<span class="t" style="left:475.5px;top:167px;color:#000;transform:scaleX(0.84);">17-10-2004 17...</span>
<svg style="left:561px;top:164px" width="16" height="16" viewBox="0 0 16 16"><path d="M2.5 1.5H9.5L13.5 5.5V15.5H2.5Z" fill="#fff" stroke="#000" stroke-width="1.2"/><path d="M9 1.5V5.8H13.5" fill="none" stroke="#000" stroke-width="1.2"/><path d="M6 6.5H8M4.5 8.5H11.5M4.5 10.5H11.5M4.5 12.5H11.5" stroke="#000" stroke-width="1" shape-rendering="crispEdges"/><rect x="0" y="0.5" width="6" height="4" fill="#fff"/><rect x="1.5" y="4" width="2.6" height="4" fill="#fff"/><path d="M0.2 1.6l2.6 2.6M2.8 1.6L0.2 4.2M3 4l2.2 1.6M3.2 1.2l1 .6M5.5 3.2l2-2.2M3.2 6.2l.9.6" stroke="#f00" stroke-width="1.2"/></svg>
<span class="t" style="left:582px;top:167px;color:#000;transform:scaleX(0.85);">M.RV_N32...</span>
<svg style="left:651px;top:164px" width="16" height="16" viewBox="0 0 16 16"><circle cx="5" cy="7.5" r="3.3" fill="#fff" stroke="#f00" stroke-width="1.9"/><path d="M6 6V9" stroke="#f00" stroke-width="1"/><path d="M8.6 3Q8.6 1 10.4 1Q12.2 1 12.2 3V13H8.6Z" fill="#fff" stroke="#000" stroke-width="1.2"/><path d="M9.2 7.5H11.6V13H9.2Z" fill="#f00"/><path d="M7.5 10.5L9.2 9V12Z" fill="#f00"/><rect x="5" y="11.5" width="1.8" height="3" fill="#000"/><rect x="9.6" y="12" width="1.8" height="3.6" fill="#000"/></svg>
<span class="t" style="left:672px;top:167px;color:#000;transform:scaleX(0.85);">POINT</span>
<span class="t" style="left:836px;top:167px;color:#000;transform:scaleX(0.84);">AA3C6...</span>
<svg style="left:289px;top:185px" width="14" height="10" viewBox="0 0 14 10"><path d="M0.6 5 L5 0.5 H7.4 L4.8 3.4 H13.4 V6.6 H4.8 L7.4 9.5 H5 Z" fill="#f00" stroke="#000" stroke-width="1"/></svg>
<span class="t" style="left:384px;top:184px;color:#000;transform:scaleX(0.868);">Užívateľom</span>
<span class="t" style="left:475.5px;top:184px;color:#000;transform:scaleX(0.84);">19-10-2004 14...</span>
<svg style="left:561px;top:181px" width="16" height="16" viewBox="0 0 16 16"><path d="M2.5 1.5H9.5L13.5 5.5V15.5H2.5Z" fill="#fff" stroke="#000" stroke-width="1.2"/><path d="M9 1.5V5.8H13.5" fill="none" stroke="#000" stroke-width="1.2"/><path d="M6 6.5H8M4.5 8.5H11.5M4.5 10.5H11.5M4.5 12.5H11.5" stroke="#000" stroke-width="1" shape-rendering="crispEdges"/><rect x="0" y="0.5" width="6" height="4" fill="#fff"/><rect x="1.5" y="4" width="2.6" height="4" fill="#fff"/><path d="M0.2 1.6l2.6 2.6M2.8 1.6L0.2 4.2M3 4l2.2 1.6M3.2 1.2l1 .6M5.5 3.2l2-2.2M3.2 6.2l.9.6" stroke="#f00" stroke-width="1.2"/></svg>
<span class="t" style="left:582px;top:184px;color:#000;transform:scaleX(0.85);">M.RV_N32...</span>
<svg style="left:651px;top:181px" width="16" height="16" viewBox="0 0 16 16"><circle cx="5" cy="7.5" r="3.3" fill="#fff" stroke="#f00" stroke-width="1.9"/><path d="M6 6V9" stroke="#f00" stroke-width="1"/><path d="M8.6 3Q8.6 1 10.4 1Q12.2 1 12.2 3V13H8.6Z" fill="#fff" stroke="#000" stroke-width="1.2"/><path d="M9.2 7.5H11.6V13H9.2Z" fill="#f00"/><path d="M7.5 10.5L9.2 9V12Z" fill="#f00"/><rect x="5" y="11.5" width="1.8" height="3" fill="#000"/><rect x="9.6" y="12" width="1.8" height="3.6" fill="#000"/></svg>
<span class="t" style="left:672px;top:184px;color:#000;transform:scaleX(0.85);">POINT</span>
<span class="t" style="left:836px;top:184px;color:#000;transform:scaleX(0.84);">AA3B...</span>
<div class="" style="left:158px;top:199px;width:726px;height:16px;background:#000080;border-top:1px dotted #e8e868;border-left:1px dotted #e8e868;border-right:1px dotted #e8e868;"></div>
<div class="" style="left:237px;top:199px;width:1px;height:16px;background:#c0c0c0;"></div>
<div class="" style="left:288px;top:199px;width:1px;height:16px;background:#c0c0c0;"></div>
<div class="" style="left:378px;top:199px;width:1px;height:16px;background:#c0c0c0;"></div>
<div class="" style="left:470px;top:199px;width:1px;height:16px;background:#c0c0c0;"></div>
<div class="" style="left:560px;top:199px;width:1px;height:16px;background:#c0c0c0;"></div>
<div class="" style="left:650px;top:199px;width:1px;height:16px;background:#c0c0c0;"></div>
<div class="" style="left:740px;top:199px;width:1px;height:16px;background:#c0c0c0;"></div>
<div class="" style="left:830px;top:199px;width:1px;height:16px;background:#c0c0c0;"></div>
<div class="" style="left:289px;top:199px;width:15px;height:16px;background:#fff;"></div>
<div class="" style="left:561px;top:199px;width:15px;height:16px;background:#fff;"></div>
<div class="" style="left:651px;top:199px;width:15px;height:16px;background:#fff;"></div>
<svg style="left:289px;top:202px" width="14" height="10" viewBox="0 0 14 10"><path d="M0.6 5 L5 0.5 H7.4 L4.8 3.4 H13.4 V6.6 H4.8 L7.4 9.5 H5 Z" fill="#f00" stroke="#000" stroke-width="1"/></svg>
<span class="t" style="left:384px;top:201px;color:#fff;transform:scaleX(0.868);">Užívateľom</span>
<span class="t" style="left:475.5px;top:201px;color:#fff;transform:scaleX(0.84);">17-10-2004 17...</span>
<svg style="left:561px;top:198px" width="16" height="16" viewBox="0 0 16 16"><path d="M2.5 1.5H9.5L13.5 5.5V15.5H2.5Z" fill="#fff" stroke="#000" stroke-width="1.2"/><path d="M9 1.5V5.8H13.5" fill="none" stroke="#000" stroke-width="1.2"/><path d="M6 6.5H8M4.5 8.5H11.5M4.5 10.5H11.5M4.5 12.5H11.5" stroke="#000" stroke-width="1" shape-rendering="crispEdges"/><rect x="0" y="0.5" width="6" height="4" fill="#fff"/><rect x="1.5" y="4" width="2.6" height="4" fill="#fff"/><path d="M0.2 1.6l2.6 2.6M2.8 1.6L0.2 4.2M3 4l2.2 1.6M3.2 1.2l1 .6M5.5 3.2l2-2.2M3.2 6.2l.9.6" stroke="#f00" stroke-width="1.2"/></svg>
<span class="t" style="left:582px;top:201px;color:#fff;transform:scaleX(0.85);">M.RV_N32...</span>
<svg style="left:651px;top:198px" width="16" height="16" viewBox="0 0 16 16"><circle cx="5" cy="7.5" r="3.3" fill="#fff" stroke="#f00" stroke-width="1.9"/><path d="M6 6V9" stroke="#f00" stroke-width="1"/><path d="M8.6 3Q8.6 1 10.4 1Q12.2 1 12.2 3V13H8.6Z" fill="#fff" stroke="#000" stroke-width="1.2"/><path d="M9.2 7.5H11.6V13H9.2Z" fill="#f00"/><path d="M7.5 10.5L9.2 9V12Z" fill="#f00"/><rect x="5" y="11.5" width="1.8" height="3" fill="#000"/><rect x="9.6" y="12" width="1.8" height="3.6" fill="#000"/></svg>
<span class="t" style="left:672px;top:201px;color:#fff;transform:scaleX(0.85);">POINT</span>
<span class="t" style="left:836px;top:201px;color:#fff;transform:scaleX(0.84);">AA5C8...</span>
<div class="" style="left:289px;top:199px;width:15px;height:16px;background:rgba(0,0,128,.5);border-top:1px dotted rgba(128,128,0,.7);"></div>
<div class="" style="left:561px;top:199px;width:15px;height:16px;background:rgba(0,0,128,.5);border-top:1px dotted rgba(128,128,0,.7);"></div>
<div class="" style="left:651px;top:199px;width:15px;height:16px;background:rgba(0,0,128,.5);border-top:1px dotted rgba(128,128,0,.7);"></div>
<svg style="left:289px;top:219px" width="14" height="10" viewBox="0 0 14 10"><path d="M0.6 5 L5 0.5 H7.4 L4.8 3.4 H13.4 V6.6 H4.8 L7.4 9.5 H5 Z" fill="#f00" stroke="#000" stroke-width="1"/></svg>
<span class="t" style="left:384px;top:218px;color:#000;transform:scaleX(0.868);">Užívateľom</span>
<span class="t" style="left:475.5px;top:218px;color:#000;transform:scaleX(0.84);">19-10-2004 14...</span>
<svg style="left:561px;top:215px" width="16" height="16" viewBox="0 0 16 16"><path d="M2.5 1.5H9.5L13.5 5.5V15.5H2.5Z" fill="#fff" stroke="#000" stroke-width="1.2"/><path d="M9 1.5V5.8H13.5" fill="none" stroke="#000" stroke-width="1.2"/><path d="M6 6.5H8M4.5 8.5H11.5M4.5 10.5H11.5M4.5 12.5H11.5" stroke="#000" stroke-width="1" shape-rendering="crispEdges"/><rect x="0" y="0.5" width="6" height="4" fill="#fff"/><rect x="1.5" y="4" width="2.6" height="4" fill="#fff"/><path d="M0.2 1.6l2.6 2.6M2.8 1.6L0.2 4.2M3 4l2.2 1.6M3.2 1.2l1 .6M5.5 3.2l2-2.2M3.2 6.2l.9.6" stroke="#f00" stroke-width="1.2"/></svg>
<span class="t" style="left:582px;top:218px;color:#000;transform:scaleX(0.85);">M.RV_N32...</span>
<svg style="left:651px;top:215px" width="16" height="16" viewBox="0 0 16 16"><circle cx="5" cy="7.5" r="3.3" fill="#fff" stroke="#f00" stroke-width="1.9"/><path d="M6 6V9" stroke="#f00" stroke-width="1"/><path d="M8.6 3Q8.6 1 10.4 1Q12.2 1 12.2 3V13H8.6Z" fill="#fff" stroke="#000" stroke-width="1.2"/><path d="M9.2 7.5H11.6V13H9.2Z" fill="#f00"/><path d="M7.5 10.5L9.2 9V12Z" fill="#f00"/><rect x="5" y="11.5" width="1.8" height="3" fill="#000"/><rect x="9.6" y="12" width="1.8" height="3.6" fill="#000"/></svg>
<span class="t" style="left:672px;top:218px;color:#000;transform:scaleX(0.85);">POINT</span>
<span class="t" style="left:836px;top:218px;color:#000;transform:scaleX(0.84);">AA532...</span>
<svg style="left:289px;top:236px" width="14" height="10" viewBox="0 0 14 10"><path d="M0.6 5 L5 0.5 H7.4 L4.8 3.4 H13.4 V6.6 H4.8 L7.4 9.5 H5 Z" fill="#f00" stroke="#000" stroke-width="1"/></svg>
<span class="t" style="left:384px;top:235px;color:#000;transform:scaleX(0.868);">Užívateľom</span>
<span class="t" style="left:475.5px;top:235px;color:#000;transform:scaleX(0.84);">17-10-2004 17...</span>
<svg style="left:561px;top:232px" width="16" height="16" viewBox="0 0 16 16"><path d="M2.5 1.5H9.5L13.5 5.5V15.5H2.5Z" fill="#fff" stroke="#000" stroke-width="1.2"/><path d="M9 1.5V5.8H13.5" fill="none" stroke="#000" stroke-width="1.2"/><path d="M6 6.5H8M4.5 8.5H11.5M4.5 10.5H11.5M4.5 12.5H11.5" stroke="#000" stroke-width="1" shape-rendering="crispEdges"/><rect x="0" y="0.5" width="6" height="4" fill="#fff"/><rect x="1.5" y="4" width="2.6" height="4" fill="#fff"/><path d="M0.2 1.6l2.6 2.6M2.8 1.6L0.2 4.2M3 4l2.2 1.6M3.2 1.2l1 .6M5.5 3.2l2-2.2M3.2 6.2l.9.6" stroke="#f00" stroke-width="1.2"/></svg>
<span class="t" style="left:582px;top:235px;color:#000;transform:scaleX(0.85);">M.RV_N33...</span>
<svg style="left:651px;top:232px" width="16" height="16" viewBox="0 0 16 16"><circle cx="5" cy="7.5" r="3.3" fill="#fff" stroke="#f00" stroke-width="1.9"/><path d="M6 6V9" stroke="#f00" stroke-width="1"/><path d="M8.6 3Q8.6 1 10.4 1Q12.2 1 12.2 3V13H8.6Z" fill="#fff" stroke="#000" stroke-width="1.2"/><path d="M9.2 7.5H11.6V13H9.2Z" fill="#f00"/><path d="M7.5 10.5L9.2 9V12Z" fill="#f00"/><rect x="5" y="11.5" width="1.8" height="3" fill="#000"/><rect x="9.6" y="12" width="1.8" height="3.6" fill="#000"/></svg>
<span class="t" style="left:672px;top:235px;color:#000;transform:scaleX(0.85);">POINT</span>
<span class="t" style="left:836px;top:235px;color:#000;transform:scaleX(0.84);">AA505...</span>
<svg style="left:289px;top:253px" width="14" height="10" viewBox="0 0 14 10"><path d="M0.6 5 L5 0.5 H7.4 L4.8 3.4 H13.4 V6.6 H4.8 L7.4 9.5 H5 Z" fill="#f00" stroke="#000" stroke-width="1"/></svg>
<span class="t" style="left:384px;top:252px;color:#000;transform:scaleX(0.868);">Užívateľom</span>
<span class="t" style="left:475.5px;top:252px;color:#000;transform:scaleX(0.84);">17-10-2004 17...</span>
<svg style="left:561px;top:249px" width="16" height="16" viewBox="0 0 16 16"><path d="M2.5 1.5H9.5L13.5 5.5V15.5H2.5Z" fill="#fff" stroke="#000" stroke-width="1.2"/><path d="M9 1.5V5.8H13.5" fill="none" stroke="#000" stroke-width="1.2"/><path d="M6 6.5H8M4.5 8.5H11.5M4.5 10.5H11.5M4.5 12.5H11.5" stroke="#000" stroke-width="1" shape-rendering="crispEdges"/><rect x="0" y="0.5" width="6" height="4" fill="#fff"/><rect x="1.5" y="4" width="2.6" height="4" fill="#fff"/><path d="M0.2 1.6l2.6 2.6M2.8 1.6L0.2 4.2M3 4l2.2 1.6M3.2 1.2l1 .6M5.5 3.2l2-2.2M3.2 6.2l.9.6" stroke="#f00" stroke-width="1.2"/></svg>
<span class="t" style="left:582px;top:252px;color:#000;transform:scaleX(0.85);">M.RV_N32...</span>
<svg style="left:651px;top:249px" width="16" height="16" viewBox="0 0 16 16"><circle cx="5" cy="7.5" r="3.3" fill="#fff" stroke="#f00" stroke-width="1.9"/><path d="M6 6V9" stroke="#f00" stroke-width="1"/><path d="M8.6 3Q8.6 1 10.4 1Q12.2 1 12.2 3V13H8.6Z" fill="#fff" stroke="#000" stroke-width="1.2"/><path d="M9.2 7.5H11.6V13H9.2Z" fill="#f00"/><path d="M7.5 10.5L9.2 9V12Z" fill="#f00"/><rect x="5" y="11.5" width="1.8" height="3" fill="#000"/><rect x="9.6" y="12" width="1.8" height="3.6" fill="#000"/></svg>
<span class="t" style="left:672px;top:252px;color:#000;transform:scaleX(0.85);">POINT</span>
<span class="t" style="left:836px;top:252px;color:#000;transform:scaleX(0.84);">AA3A5...</span>
<svg style="left:289px;top:270px" width="14" height="10" viewBox="0 0 14 10"><path d="M0.6 5 L5 0.5 H7.4 L4.8 3.4 H13.4 V6.6 H4.8 L7.4 9.5 H5 Z" fill="#f00" stroke="#000" stroke-width="1"/></svg>
<span class="t" style="left:384px;top:269px;color:#000;transform:scaleX(0.868);">Užívateľom</span>
<span class="t" style="left:475.5px;top:269px;color:#000;transform:scaleX(0.84);">13-10-2004 22...</span>
<svg style="left:561px;top:266px" width="16" height="16" viewBox="0 0 16 16"><path d="M2.5 1.5H9.5L13.5 5.5V15.5H2.5Z" fill="#fff" stroke="#000" stroke-width="1.2"/><path d="M9 1.5V5.8H13.5" fill="none" stroke="#000" stroke-width="1.2"/><path d="M6 6.5H8M4.5 8.5H11.5M4.5 10.5H11.5M4.5 12.5H11.5" stroke="#000" stroke-width="1" shape-rendering="crispEdges"/><rect x="0" y="0.5" width="6" height="4" fill="#fff"/><rect x="1.5" y="4" width="2.6" height="4" fill="#fff"/><path d="M0.2 1.6l2.6 2.6M2.8 1.6L0.2 4.2M3 4l2.2 1.6M3.2 1.2l1 .6M5.5 3.2l2-2.2M3.2 6.2l.9.6" stroke="#f00" stroke-width="1.2"/></svg>
<span class="t" style="left:582px;top:269px;color:#000;transform:scaleX(0.85);">H.IF300_H...</span>
<svg style="left:651px;top:266px" width="16" height="16" viewBox="0 0 16 16"><rect x="0.5" y="1.5" width="7.5" height="13" fill="#c0c0c0" stroke="#b0b0b0" stroke-width="1"/><rect x="8" y="2" width="6" height="12.5" fill="#b4b4b4"/><rect x="8.3" y="3" width="1.4" height="11" fill="#808080"/><rect x="11" y="4" width="1.6" height="10" fill="#909090"/><path d="M13.8 3V9.5M14.8 9.5V14" stroke="#000" stroke-width="1.1"/><rect x="7.5" y="0.8" width="1.2" height="1.4" fill="#000"/><rect x="7.5" y="12.5" width="1.2" height="3" fill="#000"/><path d="M4 15.5H7" stroke="#000" stroke-width="1"/><path d="M1 8H6" stroke="#000" stroke-width="1.6"/><path d="M3.8 5.8L6.6 8L3.8 10.2Z" fill="#000"/><rect x="0.8" y="6.2" width="1.2" height="3.6" fill="#000"/></svg>
<span class="t" style="left:672px;top:269px;color:#000;transform:scaleX(0.85);">ARCH_VAL</span>
<span class="t" style="left:836px;top:269px;color:#000;transform:scaleX(0.84);">AA2C8...</span>
<svg style="left:289px;top:287px" width="14" height="10" viewBox="0 0 14 10"><path d="M0.6 5 L5 0.5 H7.4 L4.8 3.4 H13.4 V6.6 H4.8 L7.4 9.5 H5 Z" fill="#f00" stroke="#000" stroke-width="1"/></svg>
<span class="t" style="left:384px;top:286px;color:#000;transform:scaleX(0.868);">Užívateľom</span>
<span class="t" style="left:475.5px;top:286px;color:#000;transform:scaleX(0.84);">29-10-2004 08...</span>
<svg style="left:561px;top:283px" width="16" height="16" viewBox="0 0 16 16"><path d="M2.5 1.5H9.5L13.5 5.5V15.5H2.5Z" fill="#fff" stroke="#000" stroke-width="1.2"/><path d="M9 1.5V5.8H13.5" fill="none" stroke="#000" stroke-width="1.2"/><path d="M6 6.5H8M4.5 8.5H11.5M4.5 10.5H11.5M4.5 12.5H11.5" stroke="#000" stroke-width="1" shape-rendering="crispEdges"/><rect x="0" y="0.5" width="6" height="4" fill="#fff"/><rect x="1.5" y="4" width="2.6" height="4" fill="#fff"/><path d="M0.2 1.6l2.6 2.6M2.8 1.6L0.2 4.2M3 4l2.2 1.6M3.2 1.2l1 .6M5.5 3.2l2-2.2M3.2 6.2l.9.6" stroke="#f00" stroke-width="1.2"/></svg>
<span class="t" style="left:582px;top:286px;color:#000;transform:scaleX(0.85);">M.IF314_L...</span>
<svg style="left:651px;top:283px" width="16" height="16" viewBox="0 0 16 16"><circle cx="5" cy="7.5" r="3.3" fill="#fff" stroke="#f00" stroke-width="1.9"/><path d="M6 6V9" stroke="#f00" stroke-width="1"/><path d="M8.6 3Q8.6 1 10.4 1Q12.2 1 12.2 3V13H8.6Z" fill="#fff" stroke="#000" stroke-width="1.2"/><path d="M9.2 7.5H11.6V13H9.2Z" fill="#f00"/><path d="M7.5 10.5L9.2 9V12Z" fill="#f00"/><rect x="5" y="11.5" width="1.8" height="3" fill="#000"/><rect x="9.6" y="12" width="1.8" height="3.6" fill="#000"/></svg>
<span class="t" style="left:672px;top:286px;color:#000;transform:scaleX(0.85);">POINT</span>
<span class="t" style="left:836px;top:286px;color:#000;transform:scaleX(0.84);">AA238...</span>
<svg style="left:289px;top:304px" width="14" height="10" viewBox="0 0 14 10"><path d="M0.6 5 L5 0.5 H7.4 L4.8 3.4 H13.4 V6.6 H4.8 L7.4 9.5 H5 Z" fill="#f00" stroke="#000" stroke-width="1"/></svg>
<span class="t" style="left:384px;top:303px;color:#000;transform:scaleX(0.868);">Užívateľom</span>
<span class="t" style="left:475.5px;top:303px;color:#000;transform:scaleX(0.84);">14-10-2004 12...</span>
<svg style="left:561px;top:300px" width="16" height="16" viewBox="0 0 16 16"><path d="M2.5 1.5H9.5L13.5 5.5V15.5H2.5Z" fill="#fff" stroke="#000" stroke-width="1.2"/><path d="M9 1.5V5.8H13.5" fill="none" stroke="#000" stroke-width="1.2"/><path d="M6 6.5H8M4.5 8.5H11.5M4.5 10.5H11.5M4.5 12.5H11.5" stroke="#000" stroke-width="1" shape-rendering="crispEdges"/><rect x="0" y="0.5" width="6" height="4" fill="#fff"/><rect x="1.5" y="4" width="2.6" height="4" fill="#fff"/><path d="M0.2 1.6l2.6 2.6M2.8 1.6L0.2 4.2M3 4l2.2 1.6M3.2 1.2l1 .6M5.5 3.2l2-2.2M3.2 6.2l.9.6" stroke="#f00" stroke-width="1.2"/></svg>
<span class="t" style="left:582px;top:303px;color:#000;transform:scaleX(0.85);">M.IF308_P...</span>
<svg style="left:651px;top:300px" width="16" height="16" viewBox="0 0 16 16"><circle cx="5" cy="7.5" r="3.3" fill="#fff" stroke="#f00" stroke-width="1.9"/><path d="M6 6V9" stroke="#f00" stroke-width="1"/><path d="M8.6 3Q8.6 1 10.4 1Q12.2 1 12.2 3V13H8.6Z" fill="#fff" stroke="#000" stroke-width="1.2"/><path d="M9.2 7.5H11.6V13H9.2Z" fill="#f00"/><path d="M7.5 10.5L9.2 9V12Z" fill="#f00"/><rect x="5" y="11.5" width="1.8" height="3" fill="#000"/><rect x="9.6" y="12" width="1.8" height="3.6" fill="#000"/></svg>
<span class="t" style="left:672px;top:303px;color:#000;transform:scaleX(0.85);">POINT</span>
<span class="t" style="left:836px;top:303px;color:#000;transform:scaleX(0.84);">AA211...</span>
<svg style="left:289px;top:321px" width="14" height="10" viewBox="0 0 14 10"><path d="M0.6 5 L5 0.5 H7.4 L4.8 3.4 H13.4 V6.6 H4.8 L7.4 9.5 H5 Z" fill="#f00" stroke="#000" stroke-width="1"/></svg>
<span class="t" style="left:384px;top:320px;color:#000;transform:scaleX(0.868);">Užívateľom</span>
<span class="t" style="left:475.5px;top:320px;color:#000;transform:scaleX(0.84);">14-10-2004 14...</span>
<svg style="left:561px;top:317px" width="16" height="16" viewBox="0 0 16 16"><path d="M2.5 1.5H9.5L13.5 5.5V15.5H2.5Z" fill="#fff" stroke="#000" stroke-width="1.2"/><path d="M9 1.5V5.8H13.5" fill="none" stroke="#000" stroke-width="1.2"/><path d="M6 6.5H8M4.5 8.5H11.5M4.5 10.5H11.5M4.5 12.5H11.5" stroke="#000" stroke-width="1" shape-rendering="crispEdges"/><rect x="0" y="0.5" width="6" height="4" fill="#fff"/><rect x="1.5" y="4" width="2.6" height="4" fill="#fff"/><path d="M0.2 1.6l2.6 2.6M2.8 1.6L0.2 4.2M3 4l2.2 1.6M3.2 1.2l1 .6M5.5 3.2l2-2.2M3.2 6.2l.9.6" stroke="#f00" stroke-width="1.2"/></svg>
<span class="t" style="left:582px;top:320px;color:#000;transform:scaleX(0.85);">M.IF350_P...</span>
<svg style="left:651px;top:317px" width="16" height="16" viewBox="0 0 16 16"><circle cx="5" cy="7.5" r="3.3" fill="#fff" stroke="#f00" stroke-width="1.9"/><path d="M6 6V9" stroke="#f00" stroke-width="1"/><path d="M8.6 3Q8.6 1 10.4 1Q12.2 1 12.2 3V13H8.6Z" fill="#fff" stroke="#000" stroke-width="1.2"/><path d="M9.2 7.5H11.6V13H9.2Z" fill="#f00"/><path d="M7.5 10.5L9.2 9V12Z" fill="#f00"/><rect x="5" y="11.5" width="1.8" height="3" fill="#000"/><rect x="9.6" y="12" width="1.8" height="3.6" fill="#000"/></svg>
<span class="t" style="left:672px;top:320px;color:#000;transform:scaleX(0.85);">POINT</span>
<span class="t" style="left:836px;top:320px;color:#000;transform:scaleX(0.84);">AA361...</span>
<svg style="left:289px;top:338px" width="14" height="10" viewBox="0 0 14 10"><path d="M0.6 5 L5 0.5 H7.4 L4.8 3.4 H13.4 V6.6 H4.8 L7.4 9.5 H5 Z" fill="#f00" stroke="#000" stroke-width="1"/></svg>
<span class="t" style="left:384px;top:337px;color:#000;transform:scaleX(0.868);">Užívateľom</span>
<span class="t" style="left:475.5px;top:337px;color:#000;transform:scaleX(0.84);">17-10-2004 17...</span>
<svg style="left:561px;top:334px" width="16" height="16" viewBox="0 0 16 16"><path d="M2.5 1.5H9.5L13.5 5.5V15.5H2.5Z" fill="#fff" stroke="#000" stroke-width="1.2"/><path d="M9 1.5V5.8H13.5" fill="none" stroke="#000" stroke-width="1.2"/><path d="M6 6.5H8M4.5 8.5H11.5M4.5 10.5H11.5M4.5 12.5H11.5" stroke="#000" stroke-width="1" shape-rendering="crispEdges"/><rect x="0" y="0.5" width="6" height="4" fill="#fff"/><rect x="1.5" y="4" width="2.6" height="4" fill="#fff"/><path d="M0.2 1.6l2.6 2.6M2.8 1.6L0.2 4.2M3 4l2.2 1.6M3.2 1.2l1 .6M5.5 3.2l2-2.2M3.2 6.2l.9.6" stroke="#f00" stroke-width="1.2"/></svg>
<span class="t" style="left:582px;top:337px;color:#000;transform:scaleX(0.85);">M.RV_N31...</span>
<svg style="left:651px;top:334px" width="16" height="16" viewBox="0 0 16 16"><circle cx="5" cy="7.5" r="3.3" fill="#fff" stroke="#f00" stroke-width="1.9"/><path d="M6 6V9" stroke="#f00" stroke-width="1"/><path d="M8.6 3Q8.6 1 10.4 1Q12.2 1 12.2 3V13H8.6Z" fill="#fff" stroke="#000" stroke-width="1.2"/><path d="M9.2 7.5H11.6V13H9.2Z" fill="#f00"/><path d="M7.5 10.5L9.2 9V12Z" fill="#f00"/><rect x="5" y="11.5" width="1.8" height="3" fill="#000"/><rect x="9.6" y="12" width="1.8" height="3.6" fill="#000"/></svg>
<span class="t" style="left:672px;top:337px;color:#000;transform:scaleX(0.85);">POINT</span>
<span class="t" style="left:836px;top:337px;color:#000;transform:scaleX(0.84);">AA31B...</span>
<svg style="left:289px;top:355px" width="14" height="10" viewBox="0 0 14 10"><path d="M0.6 5 L5 0.5 H7.4 L4.8 3.4 H13.4 V6.6 H4.8 L7.4 9.5 H5 Z" fill="#f00" stroke="#000" stroke-width="1"/></svg>
<span class="t" style="left:384px;top:354px;color:#000;transform:scaleX(0.868);">Užívateľom</span>
<span class="t" style="left:475.5px;top:354px;color:#000;transform:scaleX(0.84);">27-10-2004 14...</span>
<svg style="left:561px;top:351px" width="16" height="16" viewBox="0 0 16 16"><path d="M2.5 1.5H9.5L13.5 5.5V15.5H2.5Z" fill="#fff" stroke="#000" stroke-width="1.2"/><path d="M9 1.5V5.8H13.5" fill="none" stroke="#000" stroke-width="1.2"/><path d="M6 6.5H8M4.5 8.5H11.5M4.5 10.5H11.5M4.5 12.5H11.5" stroke="#000" stroke-width="1" shape-rendering="crispEdges"/><rect x="0" y="0.5" width="6" height="4" fill="#fff"/><rect x="1.5" y="4" width="2.6" height="4" fill="#fff"/><path d="M0.2 1.6l2.6 2.6M2.8 1.6L0.2 4.2M3 4l2.2 1.6M3.2 1.2l1 .6M5.5 3.2l2-2.2M3.2 6.2l.9.6" stroke="#f00" stroke-width="1.2"/></svg>
<span class="t" style="left:582px;top:354px;color:#000;transform:scaleX(0.85);">H.IF300_H...</span>
<svg style="left:651px;top:351px" width="16" height="16" viewBox="0 0 16 16"><rect x="0.5" y="1.5" width="7.5" height="13" fill="#c0c0c0" stroke="#b0b0b0" stroke-width="1"/><rect x="8" y="2" width="6" height="12.5" fill="#b4b4b4"/><rect x="8.3" y="3" width="1.4" height="11" fill="#808080"/><rect x="11" y="4" width="1.6" height="10" fill="#909090"/><path d="M13.8 3V9.5M14.8 9.5V14" stroke="#000" stroke-width="1.1"/><rect x="7.5" y="0.8" width="1.2" height="1.4" fill="#000"/><rect x="7.5" y="12.5" width="1.2" height="3" fill="#000"/><path d="M4 15.5H7" stroke="#000" stroke-width="1"/><path d="M1 8H6" stroke="#000" stroke-width="1.6"/><path d="M3.8 5.8L6.6 8L3.8 10.2Z" fill="#000"/><rect x="0.8" y="6.2" width="1.2" height="3.6" fill="#000"/></svg>
<span class="t" style="left:672px;top:354px;color:#000;transform:scaleX(0.85);">ARCH_VAL</span>
<span class="t" style="left:836px;top:354px;color:#000;transform:scaleX(0.84);">AA2E6...</span>
<svg style="left:289px;top:372px" width="14" height="10" viewBox="0 0 14 10"><path d="M0.6 5 L5 0.5 H7.4 L4.8 3.4 H13.4 V6.6 H4.8 L7.4 9.5 H5 Z" fill="#f00" stroke="#000" stroke-width="1"/></svg>
<span class="t" style="left:384px;top:371px;color:#000;transform:scaleX(0.868);">Užívateľom</span>
<span class="t" style="left:475.5px;top:371px;color:#000;transform:scaleX(0.84);">30-09-2004 11...</span>
<svg style="left:561px;top:368px" width="16" height="16" viewBox="0 0 16 16"><path d="M2.5 1.5H9.5L13.5 5.5V15.5H2.5Z" fill="#fff" stroke="#000" stroke-width="1.2"/><path d="M9 1.5V5.8H13.5" fill="none" stroke="#000" stroke-width="1.2"/><path d="M6 6.5H8M4.5 8.5H11.5M4.5 10.5H11.5M4.5 12.5H11.5" stroke="#000" stroke-width="1" shape-rendering="crispEdges"/><rect x="0" y="0.5" width="6" height="4" fill="#fff"/><rect x="1.5" y="4" width="2.6" height="4" fill="#fff"/><path d="M0.2 1.6l2.6 2.6M2.8 1.6L0.2 4.2M3 4l2.2 1.6M3.2 1.2l1 .6M5.5 3.2l2-2.2M3.2 6.2l.9.6" stroke="#f00" stroke-width="1.2"/></svg>
<span class="t" style="left:582px;top:371px;color:#000;transform:scaleX(0.85);">M.IF312_K...</span>
<svg style="left:651px;top:368px" width="16" height="16" viewBox="0 0 16 16"><circle cx="5" cy="7.5" r="3.3" fill="#fff" stroke="#f00" stroke-width="1.9"/><path d="M6 6V9" stroke="#f00" stroke-width="1"/><path d="M8.6 3Q8.6 1 10.4 1Q12.2 1 12.2 3V13H8.6Z" fill="#fff" stroke="#000" stroke-width="1.2"/><path d="M9.2 7.5H11.6V13H9.2Z" fill="#f00"/><path d="M7.5 10.5L9.2 9V12Z" fill="#f00"/><rect x="5" y="11.5" width="1.8" height="3" fill="#000"/><rect x="9.6" y="12" width="1.8" height="3.6" fill="#000"/></svg>
<span class="t" style="left:672px;top:371px;color:#000;transform:scaleX(0.85);">POINT</span>
<span class="t" style="left:836px;top:371px;color:#000;transform:scaleX(0.84);">AA5C...</span>
<svg style="left:289px;top:389px" width="14" height="10" viewBox="0 0 14 10"><path d="M0.6 5 L5 0.5 H7.4 L4.8 3.4 H13.4 V6.6 H4.8 L7.4 9.5 H5 Z" fill="#f00" stroke="#000" stroke-width="1"/></svg>
<span class="t" style="left:384px;top:388px;color:#000;transform:scaleX(0.868);">Užívateľom</span>
<span class="t" style="left:475.5px;top:388px;color:#000;transform:scaleX(0.84);">13-10-2004 22...</span>
<svg style="left:561px;top:385px" width="16" height="16" viewBox="0 0 16 16"><path d="M2.5 1.5H9.5L13.5 5.5V15.5H2.5Z" fill="#fff" stroke="#000" stroke-width="1.2"/><path d="M9 1.5V5.8H13.5" fill="none" stroke="#000" stroke-width="1.2"/><path d="M6 6.5H8M4.5 8.5H11.5M4.5 10.5H11.5M4.5 12.5H11.5" stroke="#000" stroke-width="1" shape-rendering="crispEdges"/><rect x="0" y="0.5" width="6" height="4" fill="#fff"/><rect x="1.5" y="4" width="2.6" height="4" fill="#fff"/><path d="M0.2 1.6l2.6 2.6M2.8 1.6L0.2 4.2M3 4l2.2 1.6M3.2 1.2l1 .6M5.5 3.2l2-2.2M3.2 6.2l.9.6" stroke="#f00" stroke-width="1.2"/></svg>
<span class="t" style="left:582px;top:388px;color:#000;transform:scaleX(0.85);">H.IF300_T...</span>
<svg style="left:651px;top:385px" width="16" height="16" viewBox="0 0 16 16"><rect x="0.5" y="1.5" width="7.5" height="13" fill="#c0c0c0" stroke="#b0b0b0" stroke-width="1"/><rect x="8" y="2" width="6" height="12.5" fill="#b4b4b4"/><rect x="8.3" y="3" width="1.4" height="11" fill="#808080"/><rect x="11" y="4" width="1.6" height="10" fill="#909090"/><path d="M13.8 3V9.5M14.8 9.5V14" stroke="#000" stroke-width="1.1"/><rect x="7.5" y="0.8" width="1.2" height="1.4" fill="#000"/><rect x="7.5" y="12.5" width="1.2" height="3" fill="#000"/><path d="M4 15.5H7" stroke="#000" stroke-width="1"/><path d="M1 8H6" stroke="#000" stroke-width="1.6"/><path d="M3.8 5.8L6.6 8L3.8 10.2Z" fill="#000"/><rect x="0.8" y="6.2" width="1.2" height="3.6" fill="#000"/></svg>
<span class="t" style="left:672px;top:388px;color:#000;transform:scaleX(0.85);">ARCH_VAL</span>
<span class="t" style="left:836px;top:388px;color:#000;transform:scaleX(0.84);">AA7E3...</span>
<div class="bdg" style="left:337px;top:282px;width:18px;height:18px;"></div>
<span class="bt" style="left:337px;top:283px;width:18px;font-family:'Liberation Serif',serif;font-size:17px;-webkit-text-stroke:.8px #000">1</span>
<div class="dith" style="left:897px;top:129px;width:16px;height:272px;"></div>
<div class="sb" style="left:897px;top:129px;width:16px;height:16px;"><div style="left:4px;top:5px;width:0;height:0;border-left:4px solid transparent;border-right:4px solid transparent;border-bottom:4.5px solid #000"></div></div>
<div class="sb" style="left:897px;top:145px;width:16px;height:16px;"></div>
<div class="sb" style="left:897px;top:385px;width:16px;height:16px;"><div style="left:4px;top:6px;width:0;height:0;border-left:4px solid transparent;border-right:4px solid transparent;border-top:4.5px solid #000"></div></div>
<div class="sunk" style="left:138px;top:405px;width:777px;height:123px;background:#fff;"></div>
<div class="hdr" style="left:140px;top:407px;width:20px;height:17px;"></div>
<div class="hdr" style="left:160px;top:407px;width:12px;height:17px;"></div>
<div class="hdr" style="left:172px;top:407px;width:741px;height:17px;"></div>
<div class="bdg" style="left:409px;top:472px;width:18px;height:18px;"></div>
<span class="bt" style="left:409px;top:473.5px;width:18px;font-family:'Liberation Sans',sans-serif;font-size:16px;-webkit-text-stroke:.6px #000">2</span>
<div class="sunk1" style="left:6px;top:537px;width:93px;height:16px;"></div>
<span class="t" style="left:10px;top:538px;color:#000;transform:scaleX(0.868);">Vsetky objekty</span>
<div class="sunk1" style="left:102px;top:537px;width:138px;height:16px;"></div>
<span class="t" style="left:106px;top:538px;color:#000;transform:scaleX(0.84);">ALL_TYPES</span>
<div class="sunk1" style="left:578px;top:537px;width:193px;height:16px;"></div>
<div class="sunk1" style="left:780px;top:537px;width:135px;height:16px;"></div>
<span class="t" style="left:785px;top:538px;color:#000;transform:scaleX(0.86);">Stranka</span>
<span class="t" style="left:828px;top:538px;color:#000;transform:scaleX(0.86);">1/70</span>
<span class="t" style="left:860.5px;top:538px;color:#000;transform:scaleX(0.86);">Nr 13920</span>
</div>
</body></html>
